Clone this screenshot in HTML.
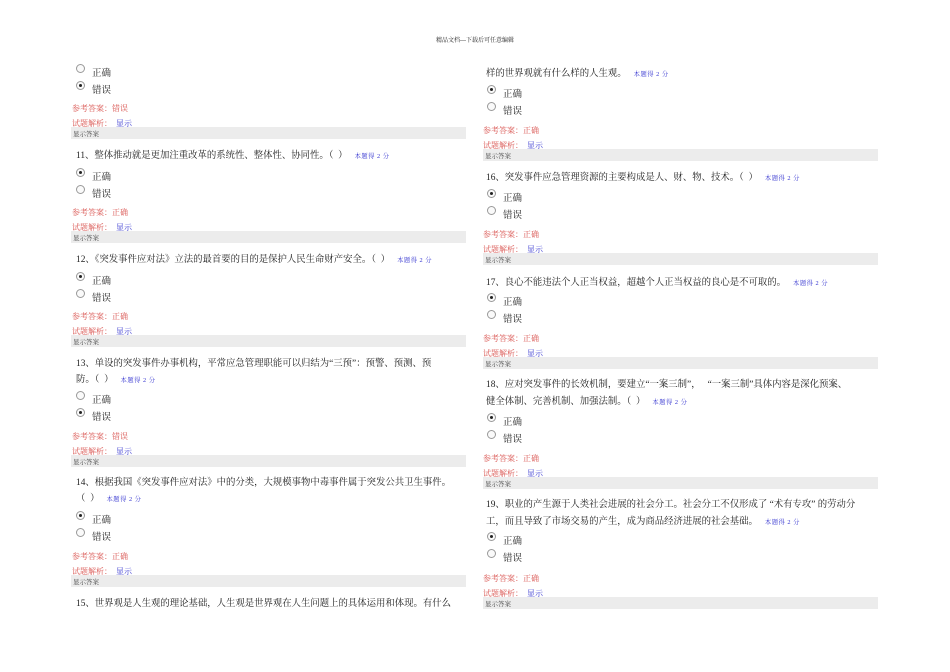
<!DOCTYPE html>
<html><head><meta charset="utf-8"><style>
body{margin:0;width:950px;height:672px;background:#fff;position:relative;overflow:hidden;font-family:"Liberation Serif","Noto Serif CJK SC",serif;color:#222}
.t{position:absolute;white-space:nowrap;line-height:12px;margin-top:2px}
.q{font-size:9.4px}
.o{font-size:9.5px}
.r{font-size:8px;color:#d9534f}
.b{font-size:8px;color:#3535d0}
.s{font-size:6.3px;color:#3535d0;letter-spacing:0.5px;font-family:"Liberation Serif","Noto Serif CJK SC",serif}
.bar{position:absolute;height:12px;background:#ececec;font-size:6.5px;color:#444;line-height:15px;padding-left:2px;box-sizing:border-box}
.rd{position:absolute;width:7px;height:7px;border:1px solid #999;border-radius:50%;background:#fafafa}
.rd.c::after{content:"";position:absolute;left:2px;top:2px;width:3px;height:3px;border-radius:50%;background:#222}
</style></head><body>
<div class="t" style="left:0;width:950px;text-align:center;top:33px;font-size:6px">精品文档---下载后可任意编辑</div>

<!-- LEFT -->
<div class="rd" style="left:76px;top:64px"></div><div class="t o" style="left:92px;top:66px">正确</div>
<div class="rd c" style="left:76px;top:81px"></div><div class="t o" style="left:92px;top:83px">错误</div>
<div class="t r" style="left:72px;top:101px">参考答案：错误</div>
<div class="t r" style="left:72px;top:116px">试题解析：&nbsp;&nbsp;<span class="b">显示</span></div>
<div class="bar" style="left:71px;top:127px;width:395px">显示答案</div>

<div class="t q" style="left:76px;top:148px">11、整体推动就是更加注重改革的系统性、整体性、协同性。（&nbsp;&nbsp;）&nbsp;&nbsp;&nbsp;<span class="s">本题得 2 分</span></div>
<div class="rd c" style="left:76px;top:168px"></div><div class="t o" style="left:92px;top:170px">正确</div>
<div class="rd" style="left:76px;top:185px"></div><div class="t o" style="left:92px;top:187px">错误</div>
<div class="t r" style="left:72px;top:205px">参考答案：正确</div>
<div class="t r" style="left:72px;top:220px">试题解析：&nbsp;&nbsp;<span class="b">显示</span></div>
<div class="bar" style="left:71px;top:231px;width:395px">显示答案</div>

<div class="t q" style="left:76px;top:252px">12、《突发事件应对法》立法的最首要的目的是保护人民生命财产安全。（&nbsp;&nbsp;）&nbsp;&nbsp;&nbsp;<span class="s">本题得 2 分</span></div>
<div class="rd c" style="left:76px;top:272px"></div><div class="t o" style="left:92px;top:274px">正确</div>
<div class="rd" style="left:76px;top:289px"></div><div class="t o" style="left:92px;top:291px">错误</div>
<div class="t r" style="left:72px;top:309px">参考答案：正确</div>
<div class="t r" style="left:72px;top:324px">试题解析：&nbsp;&nbsp;<span class="b">显示</span></div>
<div class="bar" style="left:71px;top:335px;width:395px">显示答案</div>

<div class="t q" style="left:76px;top:356px">13、单设的突发事件办事机构，平常应急管理职能可以归结为“三预”：预警、预测、预</div>
<div class="t q" style="left:76px;top:372px">防。（&nbsp;&nbsp;）&nbsp;&nbsp;&nbsp;<span class="s">本题得 2 分</span></div>
<div class="rd" style="left:76px;top:391px"></div><div class="t o" style="left:92px;top:393px">正确</div>
<div class="rd c" style="left:76px;top:408px"></div><div class="t o" style="left:92px;top:410px">错误</div>
<div class="t r" style="left:72px;top:429px">参考答案：错误</div>
<div class="t r" style="left:72px;top:444px">试题解析：&nbsp;&nbsp;<span class="b">显示</span></div>
<div class="bar" style="left:71px;top:455px;width:395px">显示答案</div>

<div class="t q" style="left:76px;top:475px">14、根据我国《突发事件应对法》中的分类，大规模事物中毒事件属于突发公共卫生事件。</div>
<div class="t q" style="left:76px;top:491px">（&nbsp;&nbsp;）&nbsp;&nbsp;&nbsp;<span class="s">本题得 2 分</span></div>
<div class="rd c" style="left:76px;top:511px"></div><div class="t o" style="left:92px;top:513px">正确</div>
<div class="rd" style="left:76px;top:528px"></div><div class="t o" style="left:92px;top:530px">错误</div>
<div class="t r" style="left:72px;top:549px">参考答案：正确</div>
<div class="t r" style="left:72px;top:564px">试题解析：&nbsp;&nbsp;<span class="b">显示</span></div>
<div class="bar" style="left:71px;top:575px;width:395px">显示答案</div>

<div class="t q" style="left:76px;top:596px">15、世界观是人生观的理论基础，人生观是世界观在人生问题上的具体运用和体现。有什么</div>

<!-- RIGHT -->
<div class="t q" style="left:486px;top:66px">样的世界观就有什么样的人生观。&nbsp;&nbsp;&nbsp;<span class="s">本题得 2 分</span></div>
<div class="rd c" style="left:487px;top:85px"></div><div class="t o" style="left:503px;top:87px">正确</div>
<div class="rd" style="left:487px;top:102px"></div><div class="t o" style="left:503px;top:104px">错误</div>
<div class="t r" style="left:483px;top:123px">参考答案：正确</div>
<div class="t r" style="left:483px;top:138px">试题解析：&nbsp;&nbsp;<span class="b">显示</span></div>
<div class="bar" style="left:483px;top:149px;width:395px">显示答案</div>

<div class="t q" style="left:486px;top:170px">16、突发事件应急管理资源的主要构成是人、财、物、技术。（&nbsp;&nbsp;）&nbsp;&nbsp;&nbsp;<span class="s">本题得 2 分</span></div>
<div class="rd c" style="left:487px;top:189px"></div><div class="t o" style="left:503px;top:191px">正确</div>
<div class="rd" style="left:487px;top:206px"></div><div class="t o" style="left:503px;top:208px">错误</div>
<div class="t r" style="left:483px;top:227px">参考答案：正确</div>
<div class="t r" style="left:483px;top:242px">试题解析：&nbsp;&nbsp;<span class="b">显示</span></div>
<div class="bar" style="left:483px;top:253px;width:395px">显示答案</div>

<div class="t q" style="left:486px;top:275px">17、良心不能违法个人正当权益，超越个人正当权益的良心是不可取的。&nbsp;&nbsp;&nbsp;<span class="s">本题得 2 分</span></div>
<div class="rd c" style="left:487px;top:293px"></div><div class="t o" style="left:503px;top:295px">正确</div>
<div class="rd" style="left:487px;top:310px"></div><div class="t o" style="left:503px;top:312px">错误</div>
<div class="t r" style="left:483px;top:331px">参考答案：正确</div>
<div class="t r" style="left:483px;top:346px">试题解析：&nbsp;&nbsp;<span class="b">显示</span></div>
<div class="bar" style="left:483px;top:357px;width:395px">显示答案</div>

<div class="t q" style="left:486px;top:377px">18、应对突发事件的长效机制，要建立“一案三制”，&nbsp;&nbsp;&nbsp;“一案三制”具体内容是深化预案、</div>
<div class="t q" style="left:486px;top:394px">健全体制、完善机制、加强法制。（&nbsp;&nbsp;）&nbsp;&nbsp;&nbsp;<span class="s">本题得 2 分</span></div>
<div class="rd c" style="left:487px;top:413px"></div><div class="t o" style="left:503px;top:415px">正确</div>
<div class="rd" style="left:487px;top:430px"></div><div class="t o" style="left:503px;top:432px">错误</div>
<div class="t r" style="left:483px;top:451px">参考答案：正确</div>
<div class="t r" style="left:483px;top:466px">试题解析：&nbsp;&nbsp;<span class="b">显示</span></div>
<div class="bar" style="left:483px;top:477px;width:395px">显示答案</div>

<div class="t q" style="left:486px;top:497px">19、职业的产生源于人类社会进展的社会分工。社会分工不仅形成了&nbsp;“术有专攻”&nbsp;的劳动分</div>
<div class="t q" style="left:486px;top:514px">工，而且导致了市场交易的产生，成为商品经济进展的社会基础。&nbsp;&nbsp;&nbsp;<span class="s">本题得 2 分</span></div>
<div class="rd c" style="left:487px;top:532px"></div><div class="t o" style="left:503px;top:534px">正确</div>
<div class="rd" style="left:487px;top:549px"></div><div class="t o" style="left:503px;top:551px">错误</div>
<div class="t r" style="left:483px;top:571px">参考答案：正确</div>
<div class="t r" style="left:483px;top:586px">试题解析：&nbsp;&nbsp;<span class="b">显示</span></div>
<div class="bar" style="left:483px;top:597px;width:395px">显示答案</div>
</body></html>
